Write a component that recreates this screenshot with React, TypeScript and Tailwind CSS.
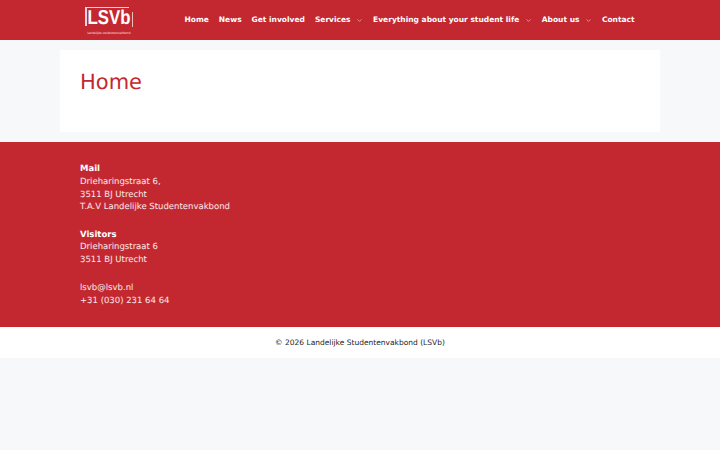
import React from 'react';
import { ChevronDown } from 'lucide-react';

const navItems = [
  { label: 'Home' },
  { label: 'News' },
  { label: 'Get involved' },
  { label: 'Services', sub: true },
  { label: 'Everything about your student life', sub: true },
  { label: 'About us', sub: true },
  { label: 'Contact' },
];

const Logo = () => (
  <div className="relative flex h-[30px] w-[48px] flex-col items-center">
    {/* rough bracket around the wordmark */}
    <div className="absolute left-0 top-[2px] h-[19px] w-[44px] border-l-2 border-t border-white/80" />
    <div className="absolute right-0 top-[7px] h-[15px] w-[1px] bg-white/70" />
    <span className="mt-[1px] origin-left scale-x-[.84] self-start pl-[3px] font-['Liberation_Sans',sans-serif] text-[20px] font-bold leading-[24px] text-white">
      LSVb
    </span>
    <span className="mt-[1px] whitespace-nowrap text-[3px] leading-[4px] text-white/80">
      landelijke studentenvakbond
    </span>
  </div>
);

const App: React.FC = () => {
  return (
    <div className="flex min-h-[450px] flex-col bg-[#f7f8f9] font-['DejaVu_Sans',sans-serif] [text-rendering:geometricPrecision]">
      {/* Header */}
      <header className="h-10 bg-[#c32831]">
        <div className="mx-auto flex h-full w-[600px] items-center">
          <div className="ml-[25px] mr-[51.5px] mt-[-1px]">
            <Logo />
          </div>
          <nav className="flex items-center text-[7.5px] font-bold text-white">
            {navItems.map((item) => (
              <a key={item.label} className="flex items-center whitespace-nowrap pr-[10px]">
                {item.label}
                {item.sub && <ChevronDown className="ml-[5.5px] h-[7px] w-[7px] text-white/80" />}
              </a>
            ))}
          </nav>
        </div>
      </header>

      {/* Content */}
      <main className="mx-auto mt-[10px] h-[82px] w-[600px] bg-white px-5 pt-[20px]">
        <h1 className="text-[21px] leading-[25px] text-[#c32831]">Home</h1>
      </main>

      {/* Footer widgets */}
      <section className="mt-[10px] h-[185px] bg-[#c32831] pt-[21px] text-[8.5px] leading-[12.75px] text-white/90">
        <div className="mx-auto w-[600px] px-5">
          <p className="mb-[14.5px]">
            <strong className="font-bold text-white">Mail</strong>
            <br />
            Drieharingstraat 6,
            <br />
            3511 BJ Utrecht
            <br />
            T.A.V Landelijke Studentenvakbond
          </p>
          <p className="mb-[15px]">
            <strong className="font-bold text-white">Visitors</strong>
            <br />
            Drieharingstraat 6
            <br />
            3511 BJ Utrecht
          </p>
          <p>
            lsvb@lsvb.nl
            <br />
            +31 (030) 231 64 64
          </p>
        </div>
      </section>

      {/* Copyright */}
      <footer className="flex h-[31px] items-center justify-center bg-white text-[7.5px] text-[#222222]">
        © 2026 Landelijke Studentenvakbond (LSVb)
      </footer>
    </div>
  );
};

export default App;
